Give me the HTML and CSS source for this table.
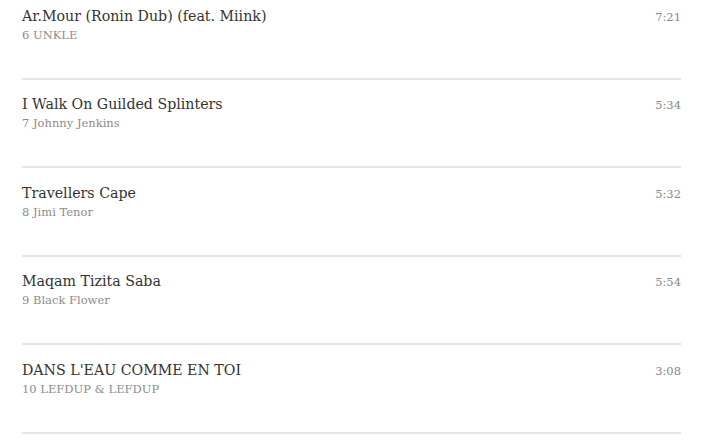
FILE: index.html
```html
<!DOCTYPE html>
<html>
<head>
<meta charset="utf-8">
<link rel="stylesheet" href="styles.css">
</head>
<body>
<ul class="tracks">
  <li class="track">
    <div class="info"><div class="title">Ar.Mour (Ronin Dub) (feat. Miink)</div><div class="artist">6 UNKLE</div></div>
    <div class="time">7:21</div>
  </li>
  <li class="track">
    <div class="info"><div class="title">I Walk On Guilded Splinters</div><div class="artist">7 Johnny Jenkins</div></div>
    <div class="time">5:34</div>
  </li>
  <li class="track">
    <div class="info"><div class="title">Travellers Cape</div><div class="artist">8 Jimi Tenor</div></div>
    <div class="time">5:32</div>
  </li>
  <li class="track">
    <div class="info"><div class="title">Maqam Tizita Saba</div><div class="artist">9 Black Flower</div></div>
    <div class="time">5:54</div>
  </li>
  <li class="track">
    <div class="info"><div class="title">DANS L'EAU COMME EN TOI</div><div class="artist">10 LEFDUP &amp; LEFDUP</div></div>
    <div class="time">3:08</div>
  </li>
</ul>
</body>
</html>
```
FILE: styles.css
```css
html, body {
  margin: 0;
  padding: 0;
  background: #fff;
  overflow: hidden;
}
body {
  font-family: "DejaVu Serif", "Liberation Serif", serif;
}
.tracks {
  list-style: none;
  margin: -9px 20px 0 22px;
  padding: 0;
}
.track {
  display: flex;
  justify-content: space-between;
  align-items: baseline;
  padding: 15.5px 0 34px;
  border-bottom: 2px solid #e6e6e6;
}
.title {
  font-size: 14.2px;
  line-height: 19px;
  color: #333;
}
.artist {
  font-size: 11.5px;
  line-height: 18px;
  color: #8c8c8c;
}
.time {
  font-size: 11.5px;
  color: #888;
}
```
